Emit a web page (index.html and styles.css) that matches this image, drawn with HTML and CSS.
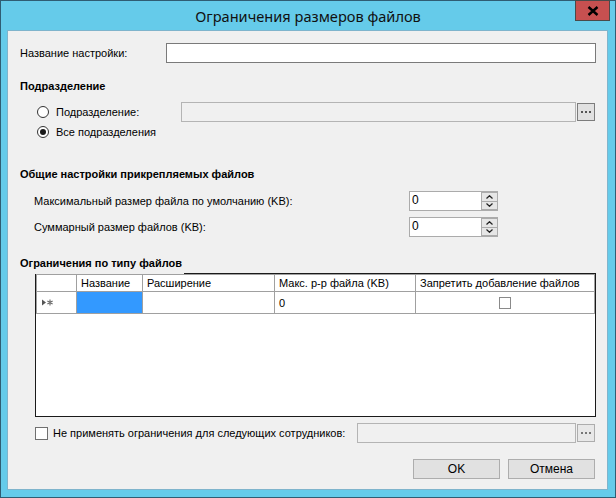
FILE: index.html
```html
<!DOCTYPE html>
<html lang="ru">
<head>
<meta charset="utf-8">
<title>Ограничения размеров файлов</title>
<link rel="stylesheet" href="styles.css">
</head>
<body>
<div class="window">
  <div class="titlebar">
    <div class="title">Ограничения размеров файлов</div>
    <div class="close">
      <svg width="12" height="10" viewBox="0 0 12 10"><path d="M1.5 1 L10.5 9 M10.5 1 L1.5 9" stroke="#000" stroke-width="2.4" fill="none"/></svg>
    </div>
  </div>
  <div class="client">
    <div class="row name-row">
      <span class="lbl name-lbl">Название настройки:</span>
      <div class="textbox name-input"></div>
    </div>

    <div class="group-title g1">Подразделение</div>

    <div class="row radio-row1">
      <span class="radio"></span>
      <span class="lbl radio-lbl1">Подразделение:</span>
      <div class="textbox disabled dep-input"></div>
      <div class="ellipsis"><svg width="10" height="2" viewBox="0 0 10 2"><rect x="0" y="0" width="2" height="2" fill="#555"/><rect x="4" y="0" width="2" height="2" fill="#555"/><rect x="8" y="0" width="2" height="2" fill="#555"/></svg></div>
    </div>

    <div class="row radio-row2">
      <span class="radio checked"></span>
      <span class="lbl">Все подразделения</span>
    </div>

    <div class="group-title g2">Общие настройки прикрепляемых файлов</div>

    <div class="row num-row n1">
      <span class="lbl num-lbl">Максимальный размер файла по умолчанию (KB):</span>
      <div class="numeric">
        <span class="num-val">0</span>
        <div class="spin">
          <span class="spin-btn"><svg width="7" height="4" viewBox="0 0 7 4"><path d="M0.5 3.5 L3.5 0.7 L6.5 3.5" stroke="#222" stroke-width="1.2" fill="none"/></svg></span>
          <span class="spin-btn"><svg width="7" height="4" viewBox="0 0 7 4"><path d="M0.5 0.5 L3.5 3.3 L6.5 0.5" stroke="#222" stroke-width="1.2" fill="none"/></svg></span>
        </div>
      </div>
    </div>

    <div class="row num-row n2">
      <span class="lbl num-lbl">Суммарный размер файлов (KB):</span>
      <div class="numeric">
        <span class="num-val">0</span>
        <div class="spin">
          <span class="spin-btn"><svg width="7" height="4" viewBox="0 0 7 4"><path d="M0.5 3.5 L3.5 0.7 L6.5 3.5" stroke="#222" stroke-width="1.2" fill="none"/></svg></span>
          <span class="spin-btn"><svg width="7" height="4" viewBox="0 0 7 4"><path d="M0.5 0.5 L3.5 3.3 L6.5 0.5" stroke="#222" stroke-width="1.2" fill="none"/></svg></span>
        </div>
      </div>
    </div>

    <div class="group-title g3">Ограничения по типу файлов</div>

    <div class="grid">
      <div class="grid-row header">
        <div class="cell c0"></div>
        <div class="cell c1">Название</div>
        <div class="cell c2">Расширение</div>
        <div class="cell c3">Макс. р-р файла (KB)</div>
        <div class="cell c4">Запретить добавление файлов</div>
      </div>
      <div class="grid-row data">
        <div class="cell c0"><svg width="14" height="7" viewBox="0 0 14 7"><path d="M1 0.5 L5 3.5 L1 6.5 Z" fill="#555"/><path d="M9 0.5 V6.5 M6.4 2 L11.6 5 M11.6 2 L6.4 5" stroke="#666" stroke-width="1.1"/></svg></div>
        <div class="cell c1 selected"></div>
        <div class="cell c2"></div>
        <div class="cell c3">0</div>
        <div class="cell c4 center"><span class="cb small"></span></div>
      </div>
    </div>

    <div class="row bottom-row">
      <span class="cb"></span>
      <span class="lbl bottom-lbl">Не применять ограничения для следующих сотрудников:</span>
      <div class="textbox disabled emp-input"></div>
      <div class="ellipsis light"><svg width="10" height="2" viewBox="0 0 10 2"><rect x="0" y="0" width="2" height="2" fill="#777"/><rect x="4" y="0" width="2" height="2" fill="#777"/><rect x="8" y="0" width="2" height="2" fill="#777"/></svg></div>
    </div>

    <div class="row buttons">
      <div class="btn">OK</div>
      <div class="btn">Отмена</div>
    </div>
  </div>
</div>
</body>
</html>
```

FILE: styles.css
```css
* { box-sizing: border-box; }
html, body { margin: 0; padding: 0; }
body {
  width: 616px;
  height: 498px;
  overflow: hidden;
  font-family: "Liberation Sans", Arial, sans-serif;
  font-size: 11px;
  color: #000;
  background: #65cbea;
}
.window {
  width: 616px;
  height: 498px;
  border: 1px solid #2f5d73;
  background: #65cbea;
  display: flex;
  flex-direction: column;
}
.titlebar {
  height: 29px;
  flex: none;
  position: relative;
  display: flex;
  align-items: center;
  justify-content: center;
}
.title {
  font-family: "Noto Sans", "Open Sans", sans-serif;
  font-size: 14.6px;
  color: #111;
  padding-top: 1px;
}
.close {
  position: absolute;
  top: -1px;
  right: 5px;
  width: 35px;
  height: 21px;
  background: #c75050;
  border: 1px solid #4a4a4a;
  display: flex;
  align-items: center;
  justify-content: center;
}
.client {
  flex: 1;
  margin: 0 7px 7px 6px;
  border: 1px solid #7fb4cc;
  background: #f0f0f0;
  display: flex;
  flex-direction: column;
}
.row {
  display: flex;
  align-items: center;
  flex: none;
}
.lbl { white-space: nowrap; flex: none; }
.textbox {
  flex: none;
  height: 20px;
  background: #fff;
  border: 1px solid #7a7a7a;
}
.textbox.disabled {
  background: #f0f0f0;
  border-color: #b4b4b4;
  height: 20px;
}
.name-row { margin-top: 12px; height: 20px; padding-left: 12px; }
.name-lbl { width: 146px; }
.name-input { width: 430px; }

.group-title {
  font-weight: bold;
  height: 13px;
  line-height: 13px;
  padding-left: 12px;
  flex: none;
}
.g1 { margin-top: 17px; }
.g2 { margin-top: 28px; }
.g3 {
  margin-top: 20px;
  height: 17px;
  align-self: flex-start;
  padding-right: 2px;
  background: #f0f0f0;
  position: relative;
  z-index: 1;
}

.radio {
  flex: none;
  width: 12px;
  height: 12px;
  border: 1px solid #333;
  border-radius: 50%;
  background: #fff;
  display: flex;
  align-items: center;
  justify-content: center;
}
.radio.checked::after {
  content: "";
  width: 6px;
  height: 6px;
  border-radius: 50%;
  background: #1a1a1a;
}
.radio-row1 { margin-top: 9px; height: 20px; padding-left: 29px; }
.radio-row1 .radio-lbl1 { margin-left: 7px; width: 125px; }
.dep-input { width: 395px; }
.ellipsis {
  flex: none;
  width: 18px;
  height: 18px;
  margin-left: 1px;
  background: #e1e1e1;
  border: 1px solid #7c7c7c;
  display: flex;
  align-items: center;
  justify-content: center;
}
.ellipsis.light { border-color: #adadad; background: #e8e8e8; }
.radio-row2 { margin-top: 2px; height: 16px; padding-left: 29px; }
.radio-row2 .lbl { margin-left: 7px; }

.num-row { height: 20px; padding-left: 26px; }
.n1 { margin-top: 10px; }
.n2 { margin-top: 6px; }
.num-lbl { width: 375px; }
.numeric {
  flex: none;
  width: 89px;
  height: 20px;
  border: 1px solid #ababab;
  background: #fff;
  display: flex;
}
.num-val {
  flex: 1;
  padding-left: 2px;
  line-height: 17px;
  font-size: 12px;
}
.spin {
  flex: none;
  width: 16px;
  display: flex;
  flex-direction: column;
  background: #ababab;
  gap: 1px;
  padding: 1px 0 1px 1px;
}
.spin-btn {
  flex: 1;
  background: #e6e6e6;
  display: flex;
  align-items: center;
  justify-content: center;
}

.grid {
  flex: none;
  margin-top: -1px;
  margin-left: 27px;
  width: 561px;
  height: 144px;
  border: 1px solid #1a1a1a;
  background: #fff;
}
.grid-row { display: flex; }
.grid-row.header { height: 18px; }
.grid-row.data { height: 22px; }
.cell {
  flex: none;
  border-right: 1px solid #a0a0a0;
  border-bottom: 1px solid #a0a0a0;
  padding-left: 4px;
  display: flex;
  align-items: center;
  white-space: nowrap;
}
.header .cell { border-top: 1px solid #a0a0a0; }
.cell.c0 { width: 41px; border-left: 1px solid #a0a0a0; padding-left: 4px; }
.cell.c1 { width: 66px; }
.cell.c2 { width: 132px; }
.cell.c3 { width: 141px; }
.cell.c4 { width: 179px; }
.cell.selected { background: #3399ff; }
.cell.center { justify-content: center; padding-left: 0; }

.cb {
  flex: none;
  width: 13px;
  height: 13px;
  border: 1px solid #707070;
  background: #fff;
}
.cb.small { width: 12px; height: 12px; border-color: #8a8a8a; }

.bottom-row { margin-top: 6px; height: 20px; padding-left: 27px; }
.bottom-lbl { margin-left: 5px; width: 304px; }
.emp-input { width: 219px; }

.buttons {
  margin-top: 16px;
  height: 20px;
  justify-content: flex-end;
  padding-right: 12px;
  gap: 8px;
}
.btn {
  width: 87px;
  height: 20px;
  background: #e1e1e1;
  border: 1px solid #adadad;
  display: flex;
  align-items: center;
  justify-content: center;
  font-size: 12px;
}
```
